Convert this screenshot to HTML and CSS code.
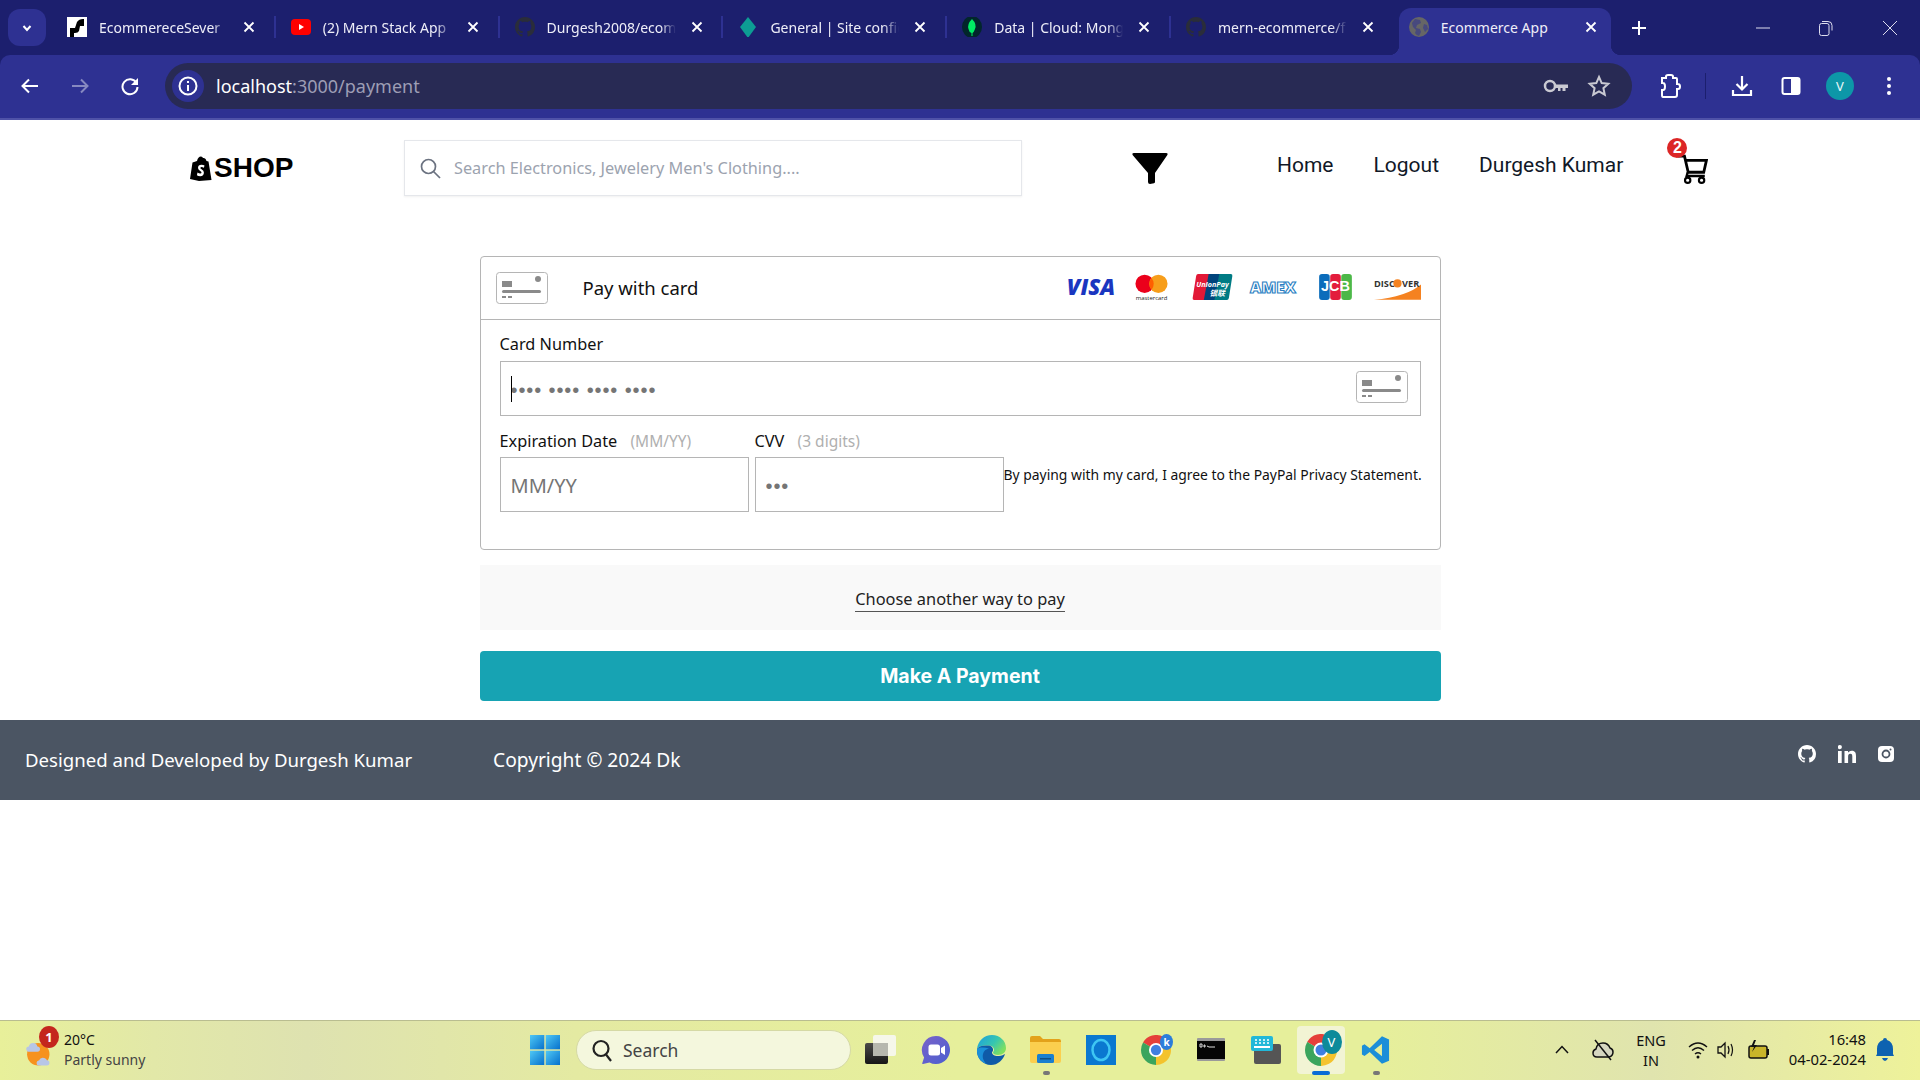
FILE: index.html
```html
<!DOCTYPE html>
<html lang="en">
<head>
<meta charset="utf-8">
<title>Ecommerce App</title>
<link rel="stylesheet" href="styles.css">
</head>
<body>
<svg class="defs" aria-hidden="true">
  <symbol id="gh" viewBox="0 0 16 16"><path fill="currentColor" d="M8 0C3.58 0 0 3.58 0 8c0 3.54 2.29 6.53 5.47 7.59.4.07.55-.17.55-.38 0-.19-.01-.82-.01-1.49-2.01.37-2.53-.49-2.69-.94-.09-.23-.48-.94-.82-1.13-.28-.15-.68-.52-.01-.53.63-.01 1.08.58 1.23.82.72 1.21 1.87.87 2.33.66.07-.52.28-.87.51-1.07-1.78-.2-3.64-.89-3.64-3.95 0-.87.31-1.59.82-2.15-.08-.2-.36-1.02.08-2.12 0 0 .67-.21 2.2.82.64-.18 1.32-.27 2-.27.68 0 1.36.09 2 .27 1.53-1.04 2.2-.82 2.2-.82.44 1.1.16 1.92.08 2.12.51.56.82 1.27.82 2.15 0 3.07-1.87 3.75-3.65 3.95.29.25.54.73.54 1.48 0 1.07-.01 1.93-.01 2.2 0 .21.15.46.55.38A8.013 8.013 0 0016 8c0-4.42-3.58-8-8-8z"/></symbol>
  <symbol id="x" viewBox="0 0 12 12"><path d="M1.500 1.500l9 9M10.500 1.500l-9 9" stroke="currentColor" stroke-width="1.800" fill="none"/></symbol>
  <symbol id="cardicon" viewBox="0 0 52 32"><rect x=".5" y=".5" width="51" height="31" rx="3" fill="#fff" stroke="#b5b5b5"/><rect x="6" y="9" width="10" height="6" fill="#8a8a8a"/><rect x="6" y="18" width="39" height="3" rx="1.500" fill="#8a8a8a"/><circle cx="42" cy="7" r="3" fill="#8a8a8a"/><rect x="6" y="24" width="4" height="2" fill="#8a8a8a"/><rect x="12" y="24" width="4" height="2" fill="#8a8a8a"/></symbol>
  <symbol id="chromeicon" viewBox="0 0 32 32"><circle cx="16" cy="16" r="11" fill="none" stroke="#e5403a" stroke-width="10" stroke-dasharray="23 46.200" transform="rotate(-150 16 16)"/><circle cx="16" cy="16" r="11" fill="none" stroke="#f4c32d" stroke-width="10" stroke-dasharray="23 46.200" transform="rotate(-30 16 16)"/><circle cx="16" cy="16" r="11" fill="none" stroke="#3ba55d" stroke-width="10" stroke-dasharray="23 46.200" transform="rotate(90 16 16)"/><circle cx="16" cy="16" r="7.500" fill="#fff"/><circle cx="16" cy="16" r="5.500" fill="#3f7fe0"/></symbol>
</svg>

<div class="screen">
  <header class="browser">
    <div class="tabstrip">
      <button class="tab-menu"><svg width="12" height="12" viewBox="0 0 12 12"><path d="M2.500 4l3.500 4 3.500-4" fill="none" stroke="#fff" stroke-width="2"/></svg></button>
      <div class="tabs">
        <div class="tab">
          <svg class="fav" viewBox="0 0 20 20"><rect width="20" height="20" fill="#fff"/><path d="M3 20V11h5l2-6q2-3 6-3h1v7h-4l-1 5q-1 2-4 2H7v4z" fill="#000"/></svg>
          <span class="tab-title">EcommereceSever</span><svg class="tab-x"><use href="#x"/></svg>
        </div>
        <div class="tab">
          <svg class="fav" viewBox="0 0 20 20"><rect y="2" width="20" height="16" rx="4" fill="#f00"/><path d="M8 7l5 3-5 3z" fill="#fff"/></svg>
          <span class="tab-title">(2) Mern Stack App</span><svg class="tab-x"><use href="#x"/></svg>
        </div>
        <div class="tab">
          <svg class="fav fav-gh"><use href="#gh"/></svg>
          <span class="tab-title">Durgesh2008/ecom</span><svg class="tab-x"><use href="#x"/></svg>
        </div>
        <div class="tab">
          <svg class="fav" viewBox="0 0 20 20"><path d="M10 0l8 10-8 11-8-11z" fill="#0d9d94"/></svg>
          <span class="tab-title">General | Site config</span><svg class="tab-x"><use href="#x"/></svg>
        </div>
        <div class="tab">
          <svg class="fav" viewBox="0 0 20 20"><ellipse cx="10" cy="10" rx="10" ry="11" fill="#02262b"/><path d="M10 2q5 5 3 10-1 3-2.500 4V19h-1v-3Q7 15 6.500 12 5 7 10 2z" fill="#00ed64"/></svg>
          <span class="tab-title">Data | Cloud: Mongo</span><svg class="tab-x"><use href="#x"/></svg>
        </div>
        <div class="tab tab-nosep">
          <svg class="fav fav-gh"><use href="#gh"/></svg>
          <span class="tab-title">mern-ecommerce/f</span><svg class="tab-x"><use href="#x"/></svg>
        </div>
        <div class="tab tab-active">
          <svg class="fav" viewBox="0 0 20 20"><circle cx="10" cy="10" r="10" fill="#666"/><path d="M6 2l5 1 1 3-4 2-1 3 4 1 1 3-2 4q-3-1-4-3l1-3-3-3-1-4z M15 7l3 1 1 4-3 3-2-4z" fill="#2e3192" opacity=".55"/></svg>
          <span class="tab-title">Ecommerce App</span><svg class="tab-x"><use href="#x"/></svg>
        </div>
      </div>
      <svg class="newtab" viewBox="0 0 14 14"><path d="M7 0v14M0 7h14" stroke="#fff" stroke-width="2"/></svg>
      <div class="winctl">
        <svg width="14" height="14" viewBox="0 0 14 14"><path d="M0 7h14" stroke="#dde" stroke-width="1"/></svg>
        <svg width="14" height="16" viewBox="0 0 14 16"><rect x=".5" y="3.500" width="9.500" height="12" rx="2" fill="none" stroke="#dde"/><path d="M3 1.500h6q4 0 4 4v5" fill="none" stroke="#dde"/></svg>
        <svg width="16" height="16" viewBox="0 0 16 16"><path d="M1 1l14 14M15 1L1 15" stroke="#dde" stroke-width="1"/></svg>
      </div>
    </div>
    <div class="toolbar">
      <button class="tool"><svg width="20" height="20" viewBox="0 0 20 20"><path d="M18 10H3M9 3.500L2.500 10 9 16.500" fill="none" stroke="#fff" stroke-width="2"/></svg></button>
      <button class="tool"><svg width="20" height="20" viewBox="0 0 20 20"><path d="M2 10h15M11 3.500l6.500 6.500-6.500 6.500" fill="none" stroke="#8789c0" stroke-width="2"/></svg></button>
      <button class="tool"><svg width="20" height="20" viewBox="0 0 20 20"><path d="M16.500 7A7.500 7.500 0 1 0 17.500 11" fill="none" stroke="#fff" stroke-width="2"/><path d="M18 2v7h-7z" fill="#fff"/></svg></button>
      <div class="omnibox">
        <span class="site-info"><svg width="20" height="20" viewBox="0 0 20 20"><circle cx="10" cy="10" r="8.500" fill="none" stroke="#fff" stroke-width="2"/><path d="M10 9v6M10 5v2" stroke="#fff" stroke-width="2"/></svg></span>
        <span class="url"><span class="url-host">localhost</span>:3000/payment</span>
        <svg class="omni-key" width="26" height="16" viewBox="0 0 26 16"><circle cx="7" cy="8" r="5" fill="none" stroke="#c9c9d2" stroke-width="2.500"/><path d="M12 6.500h13v3.500h-2.500v3h-3v-3h-2v3h-2.500v-3H12z" fill="#c9c9d2"/></svg>
        <svg class="omni-star" width="24" height="24" viewBox="0 0 24 24"><path d="M12 3l2.700 6.100 6.600.7-4.900 4.400 1.400 6.500L12 17.400l-5.800 3.300 1.400-6.500-4.900-4.400 6.600-.7z" fill="none" stroke="#c9c9d2" stroke-width="2"/></svg>
      </div>
      <button class="tool tool-ext"><svg width="24" height="26" viewBox="0 0 24 26"><path d="M5 5h4V3.500Q9 2 11 2h3q2 0 2 1.500V5h3q1 0 1 1v5h1q2 0 2 2.500T21 16h-1v6q0 2-2 2H6q-1 0-1-2v-5h1q2 0 2-3.500T6 10H5z" fill="none" stroke="#fff" stroke-width="2"/></svg></button>
      <span class="tool-sep"></span>
      <div class="tool-group">
        <button class="tool"><svg width="24" height="24" viewBox="0 0 24 24"><path d="M12 2v13M6.500 10l5.500 5.500 5.500-5.500M3 16v5h18v-5" fill="none" stroke="#fff" stroke-width="2.200"/></svg></button>
        <button class="tool"><svg width="20" height="20" viewBox="0 0 20 20"><rect x="1.500" y="2" width="17" height="16" rx="2" fill="none" stroke="#fff" stroke-width="2"/><rect x="10" y="2" width="8" height="16" fill="#fff"/></svg></button>
        <button class="tool"><span class="avatar">V</span></button>
        <button class="tool"><svg width="6" height="20" viewBox="0 0 6 20"><circle cx="3" cy="3" r="2" fill="#fff"/><circle cx="3" cy="10" r="2" fill="#fff"/><circle cx="3" cy="17" r="2" fill="#fff"/></svg></button>
      </div>
    </div>
  </header>

  <main class="page">
    <nav class="navbar">
      <div class="logo">
        <svg width="22" height="25" viewBox="0 0 22 25"><path d="M2.500 6.500L7 5q1-4.500 4-4.500 1.500 0 2 1.500h1q2 .5 2.500 3l2 .5 3 18.500L9 25 0 23z" fill="#000"/><path d="M14.500 9.500q-1-.7-3-.7-3.500 0-3.500 3.200 0 1.700 2.200 3 1.300.8 1.300 1.600 0 1-1.200 1-1.300 0-2.800-1l-.6 2.600q1.400 1 3.300 1 3.700 0 3.700-3.600 0-2-2.300-3.400-1.200-.7-1.200-1.300 0-.8 1.100-.8 1.100 0 2.400.6z" fill="#fff"/></svg>
        <span>SHOP</span>
      </div>
      <label class="searchbox">
        <svg width="24" height="24" viewBox="0 0 24 24"><circle cx="10.500" cy="10.500" r="7" fill="none" stroke="#6b7280" stroke-width="1.700"/><path d="M15.500 15.500L22 22" stroke="#6b7280" stroke-width="1.700"/></svg>
        <input type="text" placeholder="Search Electronics, Jewelery Men's Clothing....">
      </label>
      <svg class="funnel" width="36" height="31" viewBox="0 0 36 31"><path d="M2 0h32q2.500 0 1.200 2.300L23 20v9q0 1-1 1.200l-4 .8q-2 0-2-2v-9L.8 2.300Q-.5 0 2 0z" fill="#000"/></svg>
      <ul class="navlinks">
        <li>Home</li>
        <li>Logout</li>
        <li>Durgesh Kumar</li>
      </ul>
      <div class="cart">
        <svg width="31" height="31" viewBox="0 0 29 29"><path d="M1 3h6l3.500 15H25l2.500-11H8" fill="none" stroke="#000" stroke-width="2.600"/><path d="M10 18l-1 3.500h17" fill="none" stroke="#000" stroke-width="2.200"/><circle cx="10" cy="25.500" r="2.500" fill="none" stroke="#000" stroke-width="2"/><circle cx="23" cy="25.500" r="2.500" fill="none" stroke="#000" stroke-width="2"/></svg>
        <span class="cart-badge">2</span>
      </div>
    </nav>

    <section class="payment">
      <div class="cardbox">
        <div class="cardbox-head">
          <svg class="card-ic"><use href="#cardicon"/></svg>
          <span class="pay-title">Pay with card</span>
          <div class="brands">
            <svg class="br-visa" width="50" height="24" viewBox="0 0 50 24"><text x="25" y="20" text-anchor="middle" class="b-visa">VISA</text></svg>
            <svg class="br-mc" width="33" height="27" viewBox="0 0 36 29"><circle cx="10.500" cy="10.500" r="10" fill="#eb001b"/><circle cx="25.500" cy="10.500" r="10" fill="#f79e1b"/><path d="M18 4a10 10 0 0 1 0 13 10 10 0 0 1 0-13z" fill="#ff5f00"/><text x="18" y="28" text-anchor="middle" class="b-mc">mastercard</text></svg>
            <svg class="br-up" width="41" height="26" viewBox="0 0 42 27"><path d="M6 0h13L14 27H2q-2 0-1.600-2L4 2q.4-2 2-2z" fill="#e21836"/><path d="M17 0h13l-5 27H12z" fill="#00447c"/><path d="M28 0h12q2 0 1.600 2L38 25q-.4 2-2 2H23z" fill="#007b84"/><text x="21" y="13" text-anchor="middle" class="b-up">UnionPay</text><text x="26" y="23" text-anchor="middle" class="b-up2">银联</text></svg>
            <svg class="br-amex" width="46" height="16" viewBox="0 0 46 16"><text x="23" y="14" text-anchor="middle" class="b-amex">AMEX</text></svg>
            <svg class="br-jcb" width="33" height="26" viewBox="0 0 34 27"><rect width="11" height="27" rx="3" fill="#0b6cbb"/><rect x="11.500" width="11" height="27" rx="3" fill="#e31d3c"/><rect x="23" width="11" height="27" rx="3" fill="#4cb848"/><text x="17" y="18" text-anchor="middle" class="b-jcb">JCB</text></svg>
            <svg class="br-disc" width="47" height="22" viewBox="0 0 46 21"><path d="M46 6v15H0q32-3 46-15z" fill="#f58220"/><text x="0" y="9" class="b-disc">DISC</text><circle cx="23" cy="5" r="4" fill="#f58220"/><text x="27.500" y="9" class="b-disc">VER</text></svg>
          </div>
        </div>
        <div class="cardbox-body">
          <label class="flabel">Card Number</label>
          <div class="cardnum">
            <input class="finput finput-dots" type="text" placeholder="•••• •••• •••• ••••">
            <span class="caret"></span>
            <svg class="card-ic card-ic-in"><use href="#cardicon"/></svg>
          </div>
          <div class="row">
            <div class="field">
              <label class="flabel">Expiration Date <em>(MM/YY)</em></label>
              <input class="finput finput-date" type="text" placeholder="MM/YY">
            </div>
            <div class="field">
              <label class="flabel">CVV <em>(3 digits)</em></label>
              <input class="finput finput-dots" type="text" placeholder="•••">
            </div>
            <p class="agree">By paying with my card, I agree to the PayPal Privacy Statement.</p>
          </div>
        </div>
      </div>
      <div class="other"><a>Choose another way to pay</a></div>
      <button class="paybtn">Make A Payment</button>
    </section>

    <footer class="footer">
      <span class="foot-a">Designed and Developed by Durgesh Kumar</span>
      <span class="foot-b">Copyright © 2024 Dk</span>
      <div class="social">
        <svg width="18" height="18"><use href="#gh"/></svg>
        <svg width="18" height="18" viewBox="0 0 18 18"><path d="M0 6h3.700v12H0zM1.850 0a2.100 2.100 0 1 1 0 4.200 2.100 2.100 0 0 1 0-4.200zM6.500 6H10v1.700C10.600 6.700 11.900 5.700 13.700 5.700 17.300 5.700 18 8 18 11.200V18h-3.700v-6c0-1.500 0-3.300-2-3.300s-2.200 1.600-2.200 3.200V18H6.500z" fill="#fff"/></svg>
        <svg width="16" height="16" viewBox="0 0 16 16"><rect width="16" height="16" rx="4" fill="#fff"/><circle cx="8" cy="8" r="3.500" fill="none" stroke="#4b5563" stroke-width="1.800"/><circle cx="12.500" cy="3.500" r="1" fill="#4b5563"/></svg>
      </div>
    </footer>
    <div class="blank"></div>
  </main>

  <footer class="taskbar">
    <div class="weather">
      <div class="wx-ic">
        <svg width="30" height="31" viewBox="0 0 32 36"><circle cx="14" cy="20" r="13" fill="#f6921e"/><path d="M2 17q-2-1-2-3 0-3 3-3 1-4 5-4 4 0 5 4 3 0 3 3t-3 3z" fill="#b7c6e6"/><path d="M14 33q-2 0-2-3 0-2 3-3 1-3 4-3 4 0 5 3 3 0 3 3t-3 3z" fill="#b7c6e6"/></svg>
        <span class="wx-badge">1</span>
      </div>
      <div class="wx-text"><div class="wx-temp">20°C</div><div class="wx-desc">Partly sunny</div></div>
    </div>
    <div class="tb-center">
      <div class="tb-item">
        <svg width="30" height="30" viewBox="0 0 30 30"><defs><linearGradient id="wg" x1="0" y1="0" x2="1" y2="1"><stop offset="0" stop-color="#4fc8f5"/><stop offset="1" stop-color="#0670cc"/></linearGradient></defs><rect width="14.300" height="14.300" fill="url(#wg)"/><rect x="15.700" width="14.300" height="14.300" fill="url(#wg)"/><rect y="15.700" width="14.300" height="14.300" fill="url(#wg)"/><rect x="15.700" y="15.700" width="14.300" height="14.300" fill="url(#wg)"/></svg>
      </div>
      <div class="tb-search">
        <svg width="22" height="24" viewBox="0 0 22 24"><circle cx="10" cy="10.500" r="7.500" fill="none" stroke="#222" stroke-width="2.200"/><path d="M15 16.500L20 23" stroke="#222" stroke-width="2.200"/></svg>
        <span>Search</span>
      </div>
      <div class="tb-item"><svg width="31" height="29" viewBox="0 0 31 29"><defs><linearGradient id="tv" x1="0" y1="0" x2="0" y2="1"><stop offset="0" stop-color="#4a4a48"/><stop offset="1" stop-color="#161616"/></linearGradient></defs><rect x="0" y="8" width="23" height="21" rx="2" fill="url(#tv)"/><rect x="8" y="0" width="23" height="21" rx="2" fill="#f6f7ea"/><rect x="8" y="8" width="15" height="13" fill="#b6b7ae"/></svg></div>
      <div class="tb-item"><svg width="30" height="30" viewBox="0 0 30 30"><defs><linearGradient id="cg" x1="0" y1="0" x2="1" y2="1"><stop offset="0" stop-color="#7a62c9"/><stop offset="1" stop-color="#4a5fd0"/></linearGradient></defs><path d="M15 1a14 14 0 1 1-6.500 26.400L2 29q-1 0-.7-1l1.800-5.500A14 14 0 0 1 15 1z" fill="url(#cg)"/><rect x="7.500" y="9.500" width="11.500" height="11" rx="2.500" fill="#fff"/><path d="M20 13l4-2.500v9.500l-4-2.500z" fill="#fff"/></svg></div>
      <div class="tb-item"><svg width="30" height="30" viewBox="0 0 30 30"><defs><linearGradient id="eg" x1="0" y1="0" x2="1" y2=".6"><stop offset="0" stop-color="#1b9de2"/><stop offset=".6" stop-color="#36c6b0"/><stop offset="1" stop-color="#7fe060"/></linearGradient></defs><path d="M1 14C2 6 8 0 16 0c8 0 14 6 14 13 0 4-3 7-8 7-3 0-5-1-5-2.500 0-.6.600-1 1-2 .5-2-1.500-5-5-5C7 10 3 11 1 14z" fill="url(#eg)"/><path d="M1 14c2-3 6-4 12-3.500 3 .5 4.500 3 4 5-.4 1-1 1.400-1 2 0 2 3 4 7 3.500 2.500 0 5-1.500 6-2-2 6-7 11-14 11C7 30 0 23 1 14z" fill="#0f5ba8"/><path d="M1 14c-.5 7 3 13 10 15-3-2-5-6-4-10 .5-3 3-5 6-5.500C8 12 3 12 1 14z" fill="#1b8fd8"/></svg></div>
      <div class="tb-item tb-open"><svg width="31" height="27" viewBox="0 0 31 27"><path d="M0 2q0-2 2-2h8l3 3h16q2 0 2 2v20H0z" fill="#e3a21a"/><path d="M0 6h31v19q0 2-2 2H2q-2 0-2-2z" fill="#fbcf4e"/><rect x="7" y="18" width="17" height="9" rx="1.500" fill="#1b7fcf"/><rect x="10" y="22" width="11" height="1.500" fill="#0f4f86"/></svg></div>
      <div class="tb-item"><svg width="30" height="30" viewBox="0 0 30 30"><rect width="30" height="30" fill="#0a78d0"/><ellipse cx="15" cy="15" rx="8.500" ry="10" fill="none" stroke="#3ec6f3" stroke-width="2.500"/></svg></div>
      <div class="tb-item tb-chrome"><svg width="30" height="30"><use href="#chromeicon"/></svg><span class="chr-b chr-k">k</span></div>
      <div class="tb-item"><svg width="28" height="23" viewBox="0 0 28 23" preserveAspectRatio="none"><rect width="28" height="23" rx="1" fill="#9a9a9a"/><rect y="3" width="28" height="18" fill="#050505"/><path d="M3 6h2v3H3zM7 7h1v2H7zM10 8l2 1h6" stroke="#ddd" fill="none"/></svg></div>
      <div class="tb-item"><svg width="30" height="28" viewBox="0 0 30 28" preserveAspectRatio="none"><rect x="3" y="8" width="27" height="20" rx="2" fill="#555"/><rect width="22" height="15" rx="2" fill="#22b8d8"/><path d="M4 4h2M8 4h2M12 4h2M16 4h2M4 7h2M8 7h2M12 7h2M16 7h2" stroke="#fff" stroke-width="1.500"/><rect x="3" y="10" width="16" height="2" fill="#fff"/></svg></div>
      <div class="tb-item tb-active"><svg width="32" height="32"><use href="#chromeicon"/></svg><span class="chr-b chr-v">V</span></div>
      <div class="tb-item tb-open"><svg width="31" height="30" viewBox="0 0 24 24" preserveAspectRatio="none"><path d="M17 1l5.500 2.500v17L17 23 7.500 13.500 3.500 16.700 1.500 15.500v-7l2-1.200 4 3.200zM17 7l-6 5 6 5z" fill="#1b8ed8"/></svg></div>
    </div>
    <div class="tb-right">
      <div class="tr tr-chev"><svg width="14" height="9" viewBox="0 0 14 9"><path d="M1 8l6-6.500L13 8" fill="none" stroke="#111" stroke-width="1.500"/></svg></div>
      <div class="tr tr-cloud"><svg width="22" height="22" viewBox="0 0 22 22"><path d="M5 18q-4 0-4-4 0-3 3-4 1-6 7-6 5 0 7 5 3 1 3 4 0 4-4 5z" fill="#d5d6c0" stroke="#111" stroke-width="1.500"/><path d="M3 1l16 20" stroke="#111" stroke-width="1.500"/></svg></div>
      <div class="tr tr-lang"><div>ENG</div><div>IN</div></div>
      <div class="tr tr-wifi"><svg width="20" height="20" viewBox="0 0 20 20"><path d="M1 7q9-8 18 0M4 10.500q6-5.500 12 0M7 14q3-2.500 6 0" fill="none" stroke="#111" stroke-width="1.400"/><circle cx="10" cy="17" r="1.500" fill="#111"/></svg></div>
      <div class="tr tr-spk"><svg width="20" height="20" viewBox="0 0 20 20"><path d="M2 7h3l4-4v14l-4-4H2z" fill="none" stroke="#111" stroke-width="1.300"/><path d="M12 6q2 4 0 8M15 4q3 6 0 12" fill="none" stroke="#111" stroke-width="1.200"/></svg></div>
      <div class="tr tr-batt"><svg width="22" height="22" viewBox="0 0 22 22"><rect x="2" y="7" width="18" height="12" rx="2" fill="#c9b52a" stroke="#111" stroke-width="1.500"/><rect x="20" y="10" width="2" height="6" fill="#111"/><path d="M7 1L4 8h3l-2 5 5-7H7l2-5z" fill="#111"/></svg></div>
      <div class="tr-clock"><div>16:48</div><div>04-02-2024</div></div>
      <div class="tr tr-bell"><svg width="18" height="24" viewBox="0 0 18 24"><path d="M9 0q2 0 2 2 6 2 6 9v5l1 2H0l1-2v-5q0-7 6-9 0-2 2-2z" fill="#0d62b0"/><path d="M6 20h6q-1 3-3 3t-3-3z" fill="#0d62b0"/></svg></div>
    </div>
  </footer>
</div>
</body>
</html>
```

FILE: styles.css
```css
* { box-sizing: border-box; }
html, body { margin: 0; padding: 0; }
body { background: #fff; font-family: "Noto Sans", "Open Sans", sans-serif; color: #111; overflow: hidden; }
button { border: 0; background: none; padding: 0; font: inherit; }
ul { list-style: none; margin: 0; padding: 0; }
.defs { display: block; width: 0; height: 0; overflow: hidden; }

.screen { height: 1080px; display: flex; flex-direction: column; }

/* browser chrome */
.browser { flex: none; background: #1c1f6e; }
.tabstrip { height: 55px; display: flex; align-items: flex-start; padding-left: 8px; }
.tab-menu { width: 38px; height: 37px; margin-top: 9px; border-radius: 12px; background: #2e3192; display: flex; align-items: center; justify-content: center; }
.tabs { display: flex; margin: 8px 0 0 11px; }
.tab { position: relative; width: 223.800px; height: 47px; padding: 0 0 9px 10px; display: flex; align-items: center; color: #eeeef8; font-size: 14px; }
.tab::after { content: ""; position: absolute; right: 5px; top: 8px; width: 2px; height: 22px; background: #2e3192; }
.tab-nosep::after, .tab-active::after { display: none; }
.tab-active { width: 212px; margin-left: -1px; background: #2e3192; border-radius: 12px 12px 0 0; }
.tab-active::before { content: ""; position: absolute; left: -10px; right: -10px; bottom: 0; height: 10px; background: radial-gradient(circle at 0 0, #1c1f6e 10px, #2e3192 10.500px) left bottom / 10px 10px no-repeat, radial-gradient(circle at 100% 0, #1c1f6e 10px, #2e3192 10.500px) right bottom / 10px 10px no-repeat; }
.fav { flex: none; width: 20px; height: 20px; }
.fav-gh { color: #2a2d3a; }
.tab-title { flex: none; width: 129px; margin-left: 12px; white-space: nowrap; overflow: hidden; -webkit-mask-image: linear-gradient(90deg, #000 88%, transparent 100%); mask-image: linear-gradient(90deg, #000 88%, transparent 100%); }
.tab-active .tab-title { -webkit-mask-image: none; mask-image: none; }
.tab-x { flex: none; width: 12px; height: 12px; margin-left: 15px; color: #fff; }
.newtab { flex: none; width: 14px; height: 14px; margin: 21px 0 0 21px; }
.winctl { margin-left: auto; margin-top: 20px; width: 164px; padding-right: 22px; display: flex; justify-content: space-between; align-items: center; }

.toolbar { height: 65px; background: #2e3192; border-bottom: 2px solid #4f52a8; border-radius: 10px 10px 0 0; display: flex; align-items: flex-start; padding: 8px 0 0 5px; }
.tool { flex: none; width: 50px; height: 46px; display: flex; align-items: center; justify-content: center; }
.tool-group { display: flex; gap: 9px; margin-left: 16px; }
.tool-group .tool { width: 40px; }
.omnibox { flex: none; width: 1467px; height: 46px; margin-left: 10px; border-radius: 23px; background: #282a54; display: flex; align-items: center; padding-left: 7px; }
.site-info { flex: none; width: 32px; height: 32px; border-radius: 50%; background: #2e3192; display: flex; align-items: center; justify-content: center; }
.url { margin-left: 12px; font-size: 18px; color: #9d9db5; }
.url-host { color: #fff; }
.omni-key { margin-left: auto; }
.omni-star { margin: 0 21px 0 18px; }
.tool-ext { width: 40px; margin-left: 17px; }
.tool-sep { flex: none; width: 1px; height: 26px; margin: 10px 0 0 16px; background: #1c1f6e; }
.avatar { width: 28px; height: 28px; border-radius: 50%; background: #0d97a8; color: #e8f8fa; font-size: 13px; display: flex; align-items: center; justify-content: center; }

/* page */
.page { flex: 1; display: flex; flex-direction: column; min-height: 0; }
.navbar { flex: none; height: 136px; display: flex; align-items: flex-start; padding-left: 190px; }
.logo { display: flex; align-items: center; width: 214px; margin-top: 32px; gap: 2px; }
.logo span { font: 700 28px/32px "Liberation Sans", Arial, sans-serif; color: #000; }
.searchbox { flex: none; width: 618px; height: 56px; margin-top: 20px; padding-left: 13px; display: flex; align-items: center; gap: 10px; border: 1px solid #e5e7eb; box-shadow: 0 1px 2px rgba(0,0,0,.06); }
.searchbox input { flex: 1; border: 0; outline: 0; font: 16.300px "Noto Sans", sans-serif; color: #111; }
.searchbox input::placeholder { color: #9ca3af; opacity: 1; }
.funnel { flex: none; margin: 33px 0 0 110px; }
.navlinks { display: flex; gap: 40px; margin: 30px 0 0 109px; font: 21px/30px Roboto, sans-serif; color: #111827; }
.cart { position: relative; flex: none; margin: 33px 0 0 54px; width: 31px; height: 31px; }
.cart-badge { position: absolute; left: -10px; top: -15px; width: 20px; height: 20px; border-radius: 50%; background: #dc2626; color: #fff; font: 700 16px/20px "Liberation Sans", sans-serif; text-align: center; }

.payment { flex: none; width: 961px; margin: 0 auto; }
.cardbox { height: 294px; border: 1px solid #b5b5b5; border-radius: 4px; }
.cardbox-head { height: 63px; border-bottom: 1px solid #b5b5b5; padding: 0 19px 0 15px; display: flex; align-items: center; }
.card-ic { flex: none; width: 52px; height: 32px; }
.pay-title { margin: -2px 0 0 35px; font-size: 18.500px; color: #111; }
.brands { margin: -2px 0 0 auto; display: flex; align-items: center; }
.brands svg { flex: none; overflow: visible; }
.br-mc { margin: 0 0 0 19px; }
.br-up { margin-left: 24px; }
.br-amex { margin-left: 17px; }
.br-jcb { margin-left: 23px; }
.br-disc { margin: 3px 0 0 22px; }
.b-visa { font: italic 800 22px "Open Sans", sans-serif; fill: #1a36c0; }
.b-mc { font: 6.500px "Open Sans", sans-serif; fill: #222; }
.b-up { font: italic 700 7.500px "Open Sans", sans-serif; fill: #fff; }
.b-up2 { font: italic 700 8px "Noto Sans CJK SC", sans-serif; fill: #fff; }
.b-amex { font: 800 15.500px "Open Sans", sans-serif; fill: #fff; stroke: #2b7fc3; stroke-width: 1.100; }
.b-jcb { font: 700 15px "Liberation Sans", sans-serif; fill: #fff; }
.b-disc { font: 700 9px "Open Sans", sans-serif; fill: #333; }

.cardbox-body { padding: 12px 19px 0 19px; }
.flabel { display: block; height: 29px; font-size: 16.300px; line-height: 24px; color: #111; }
.flabel em { font-style: normal; color: #b0b0b0; font-size: 15.500px; margin-left: 9px; }
.cardnum { position: relative; }
.finput { display: block; width: 100%; height: 55px; border: 1px solid #b5b5b5; padding: 0 10px; outline: 0; font: 20px "Noto Sans", sans-serif; color: #111; background: #fff; }
.finput::placeholder { color: #757575; opacity: 1; }
.finput-dots { font-family: "Liberation Sans", sans-serif; letter-spacing: .9px; padding-top: 3px; }
.finput-date { padding-top: 2px; }
.caret { position: absolute; left: 11px; top: 15px; width: 1px; height: 26px; background: #000; }
.card-ic-in { position: absolute; right: 13px; top: 10px; }
.row { display: flex; margin-top: 13px; }
.field { flex: none; width: 249px; margin-right: 6px; }
.field .flabel { height: 28px; }
.field + .field { margin-right: 0; }
.agree { flex: none; width: 417px; margin: 35px 0 0; font-size: 13.900px; line-height: 22px; white-space: nowrap; color: #111; }

.other { height: 65px; margin-top: 15px; background: #f9f9f9; display: flex; align-items: center; justify-content: center; }
.other a { font-size: 16.400px; line-height: 24px; padding-top: 3px; color: #222; border-bottom: 1px solid #555; }
.paybtn { display: block; width: 100%; height: 50px; margin-top: 21px; border-radius: 4px; background: #17a3b3; color: #fff; font: 700 19.500px Inter, sans-serif; }

.footer { flex: none; height: 80px; margin-top: 19px; background: #4b5563; color: #fff; display: flex; align-items: center; padding: 0 26px 2px 25px; font-size: 18.600px; }
.foot-a { width: 468px; flex: none; }
.foot-b { font-size: 19.200px; }
.social { margin-left: auto; margin-top: -10px; display: flex; align-items: center; gap: 22px; color: #fff; }
.blank { flex: 1; }

/* taskbar */
.taskbar { flex: none; height: 60px; padding-bottom: 2px; display: flex; align-items: center; border-top: 1px solid #b9bd90; background: linear-gradient(90deg, #e8f09a 0, #e2e8a8 8%, #dee2b0 16%, #e4eaa2 30%, #e6ef9b 50%, #e6ef9b 72%, #e0e4ae 86%, #eef29a 100%); }
.weather { flex: none; width: 517px; padding-left: 25px; display: flex; align-items: center; }
.wx-ic { position: relative; width: 32px; height: 36px; flex: none; padding-top: 5px; }
.wx-badge { position: absolute; left: 14px; top: -6px; width: 20px; height: 22px; border-radius: 50%; background: #c4261d; color: #fff; font: 700 13px/22px "Noto Sans", sans-serif; text-align: center; }
.wx-text { margin-left: 7px; font-size: 14px; line-height: 20px; }
.wx-temp { color: #111; }
.wx-desc { color: #444; }
.tb-center { display: flex; align-items: center; }
.tb-item { position: relative; flex: none; width: 55px; height: 48px; display: flex; align-items: center; justify-content: center; }
.tb-search { flex: none; width: 275px; height: 40px; margin: 0 2px 0 4px; border-radius: 20px; background: #f4f7dd; border: 1px solid #d5d9a5; display: flex; align-items: center; padding-left: 14px; gap: 10px; font-size: 17.500px; color: #444; }
.tb-open::after, .tb-active::after { content: ""; position: absolute; bottom: -1px; left: 50%; width: 7px; height: 4px; margin-left: -3px; border-radius: 2px; background: #777; }
.tb-active { width: 48px; margin: 0 3.500px; border-radius: 4px; background: #f2f4d4; }
.tb-active::after { width: 18px; margin-left: -9px; background: #0a6cd6; }
.chr-b { position: absolute; border-radius: 50%; color: #fff; text-align: center; }
.chr-k { right: 10px; top: 8px; width: 13px; height: 16px; background: #2b7ddb; font: 700 10px/16px "Noto Sans", sans-serif; }
.chr-v { right: 3px; top: 4px; width: 20px; height: 24px; background: #0d8a9a; font: 13px/24px "Noto Sans", sans-serif; }
.tb-right { margin-left: auto; display: flex; align-items: center; padding-right: 16px; }
.tr { flex: none; display: flex; align-items: center; justify-content: center; }
.tr-chev { width: 30px; }
.tr-cloud { width: 52px; }
.tr-lang { width: 44px; flex-direction: column; font-size: 14.500px; line-height: 20px; color: #111; }
.tr-wifi { width: 28px; margin-left: 11px; }
.tr-spk { width: 28px; }
.tr-batt { width: 36px; }
.tr-clock { flex: none; width: 90px; margin-top: -2px; text-align: right; font-size: 14.800px; line-height: 20px; color: #111; }
.tr-bell { width: 38px; }
```
